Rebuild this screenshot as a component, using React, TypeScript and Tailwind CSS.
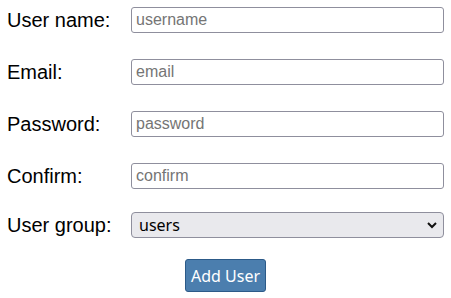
import { useState } from "react";

const inputClass =
  "w-[313px] h-[26px] border border-[#8f8f9d] rounded-[3px] bg-white px-[4px] text-[16px] text-black placeholder:text-[#757575] font-['Liberation_Sans',Arial,sans-serif] outline-none";

export default function App() {
  const [group, setGroup] = useState("users");

  const fields = [
    { label: "User name:", name: "username", type: "text" },
    { label: "Email:", name: "email", type: "email" },
    { label: "Password:", name: "password", type: "password" },
    { label: "Confirm:", name: "confirm", type: "password" },
  ];

  return (
    <div className="w-[451px] h-[298px] bg-white pl-[7px] pt-[7px] font-['Liberation_Sans',Arial,sans-serif]">
      <form onSubmit={(e) => e.preventDefault()}>
        <div className="flex flex-col gap-[26px]">
          {fields.map((f) => (
            <div key={f.name} className="flex items-center">
              <label htmlFor={f.name} className="w-[124px] text-[20px] text-black leading-[26px]">
                {f.label}
              </label>
              <input id={f.name} name={f.name} type="text" placeholder={f.name} className={inputClass} />
            </div>
          ))}
        </div>
        <div className="flex items-center mt-[23px]">
          <label htmlFor="group" className="w-[124px] text-[20px] text-black leading-[26px]">
            User group:
          </label>
          <div className="relative w-[313px] h-[26px]">
            <select
              id="group"
              value={group}
              onChange={(e) => setGroup(e.target.value)}
              className="appearance-none w-full h-full border border-[#8f8f9d] rounded-[4px] bg-[#e9e9ed] pl-[7px] text-[16px] text-black font-['Noto_Sans',sans-serif] outline-none"
            >
              <option value="users">users</option>
              <option value="admins">admins</option>
            </select>
            <svg
              className="absolute right-[6px] top-[8px] pointer-events-none"
              width="12"
              height="10"
              viewBox="0 0 12 10"
            >
              <path d="M2 3 L6 7 L10 3" fill="none" stroke="#111" strokeWidth="2" />
            </svg>
          </div>
        </div>
        <div className="mt-[21px] pl-[178px]">
          <button
            type="submit"
            className="h-[33px] px-[5px] bg-[#4b7eae] border border-[#2c5a88] rounded-[3px] text-white text-[16px] font-['Noto_Sans',sans-serif]"
          >
            Add User
          </button>
        </div>
      </form>
    </div>
  );
}
